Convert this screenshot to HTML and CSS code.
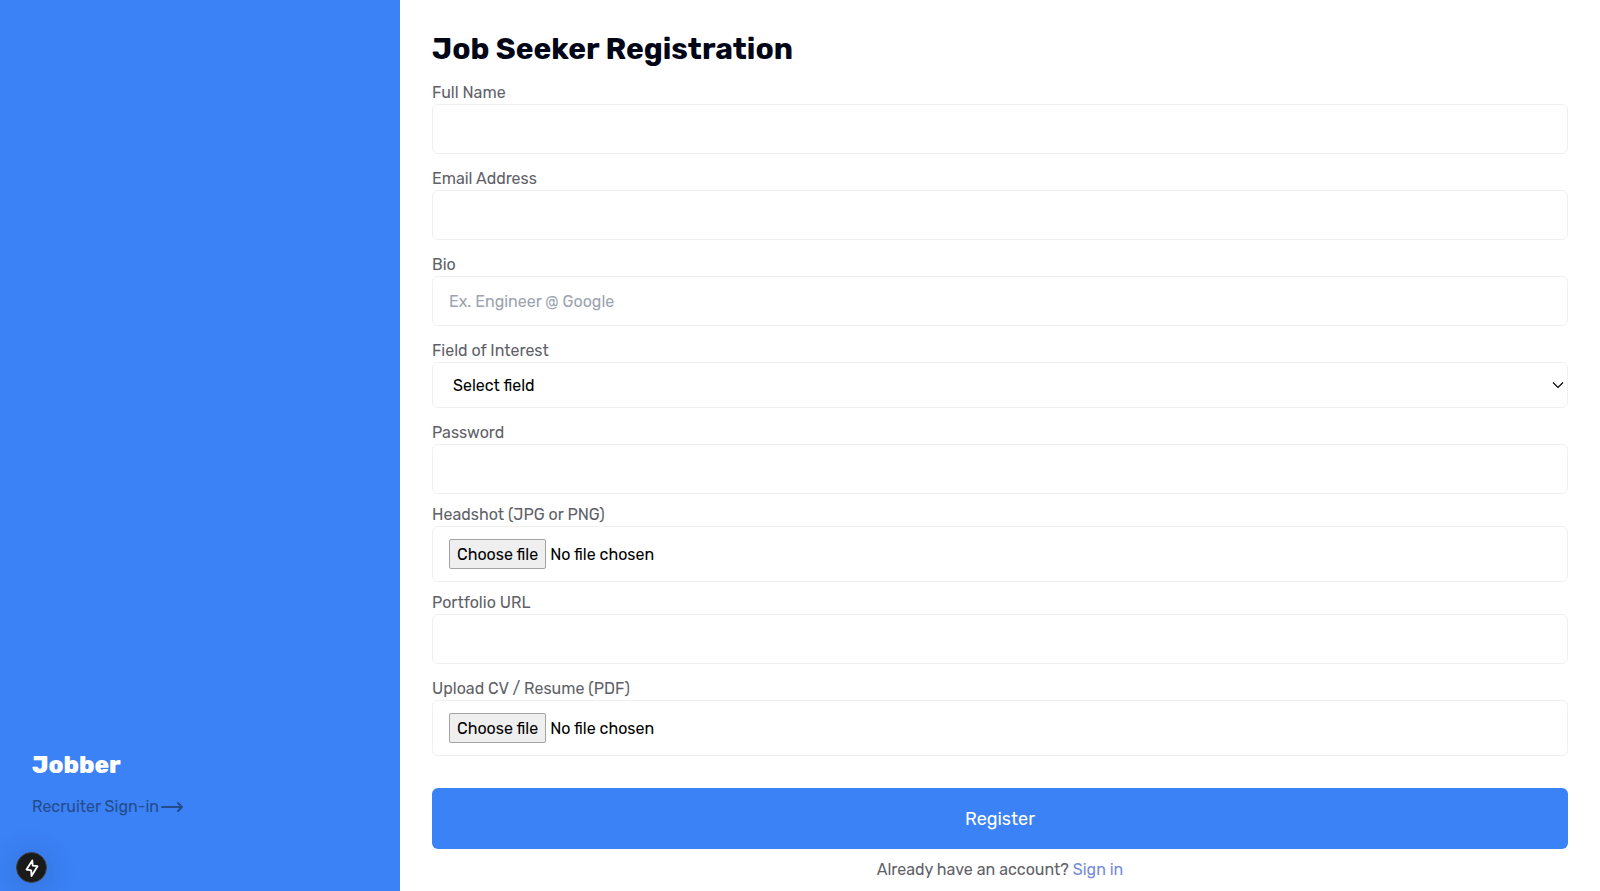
FILE: index.html
```html
<!DOCTYPE html>
<html lang="en">
<head>
    <meta charset="UTF-8">
    <meta name="viewport" content="width=device-width, initial-scale=1.0">
    <title>Job Seeker Registration - Jobber</title>
    <link rel="stylesheet" href="styles.css">
</head>
<body>
    <div class="page">
        <aside class="sidebar">
            <h2 class="brand">Jobber</h2>
            <a href="#" class="recruiter-link">Recruiter Sign-in<svg class="arrow" viewBox="0 0 24 12" fill="none" stroke="currentColor" stroke-width="2" stroke-linecap="round" stroke-linejoin="round" aria-hidden="true"><path d="M2 6h20M18 2l4 4-4 4"/></svg></a>
        </aside>

        <main class="content">
            <h1>Job Seeker Registration</h1>
            <form>
                <div class="field">
                    <label for="name">Full Name</label>
                    <input type="text" id="name" name="name">
                </div>
                <div class="field">
                    <label for="email">Email Address</label>
                    <input type="email" id="email" name="email">
                </div>
                <div class="field">
                    <label for="bio">Bio</label>
                    <input type="text" id="bio" name="bio" placeholder="Ex. Engineer @ Google">
                </div>
                <div class="field">
                    <label for="interest">Field of Interest</label>
                    <div class="select-wrap">
                        <select id="interest" name="interest">
                            <option value="">Select field</option>
                        </select>
                        <svg class="chevron" viewBox="0 0 12 8" fill="none" stroke="currentColor" stroke-width="1.1" aria-hidden="true"><path d="M1 1.500l5 5 5-5"/></svg>
                    </div>
                </div>
                <div class="field field-tight">
                    <label for="password">Password</label>
                    <input type="password" id="password" name="password">
                </div>
                <div class="field field-tight">
                    <label for="headshot">Headshot (JPG or PNG)</label>
                    <div class="file-box">
                        <span class="file-button">Choose file</span>
                        <span class="file-name">No file chosen</span>
                        <input type="file" id="headshot" name="headshot" accept="image/jpeg,image/png">
                    </div>
                </div>
                <div class="field">
                    <label for="portfolio">Portfolio URL</label>
                    <input type="url" id="portfolio" name="portfolio">
                </div>
                <div class="field">
                    <label for="cv">Upload CV / Resume (PDF)</label>
                    <div class="file-box">
                        <span class="file-button">Choose file</span>
                        <span class="file-name">No file chosen</span>
                        <input type="file" id="cv" name="cv" accept="application/pdf">
                    </div>
                </div>
                <button type="submit" class="btn-register">Register</button>
            </form>
            <p class="signin">Already have an account? <a href="#">Sign in</a></p>
        </main>
    </div>

    <button type="button" class="dev-badge" aria-label="Static route">
        <svg viewBox="0 0 20 20" fill="none" stroke="currentColor" stroke-width="1.8" stroke-linejoin="round" aria-hidden="true"><path d="M10.300 2.500 4.500 11.500l4.700.8.300 5.700 6-9.800-4.800-.6z"/></svg>
    </button>

    <script>
        // Show the picked file's name next to the button
        document.querySelectorAll('.file-box input').forEach(function(input) {
            input.addEventListener('change', function() {
                const name = input.parentElement.querySelector('.file-name');
                name.textContent = input.files.length ? input.files[0].name : 'No file chosen';
            });
        });
    </script>
</body>
</html>
```
FILE: styles.css
```css
* {
    box-sizing: border-box;
}
body {
    margin: 0;
    font-family: Rubik, Roboto, sans-serif;
    font-size: 16px;
    line-height: 24px;
    color: #000;
    background: #fff;
}
h1, h2, p {
    margin: 0;
}
a {
    text-decoration: none;
}
.page {
    display: flex;
    min-height: 100vh;
}
.sidebar {
    width: 25%;
    padding: 32px 32px 72px;
    background: #3b82f6;
    display: flex;
    flex-direction: column;
    justify-content: flex-end;
    gap: 14px;
}
.brand {
    font-size: 24px;
    line-height: 32px;
    font-weight: 800;
    color: #fff;
}
.recruiter-link {
    display: flex;
    align-items: center;
    color: #244c8c;
}
.arrow {
    width: 24px;
    height: 12px;
    margin-left: 1px;
}
.content {
    flex: 1;
    padding: 32px 32px 8px;
}
h1 {
    margin-bottom: 14px;
    font-size: 30px;
    line-height: 34px;
    font-weight: 700;
    color: #020617;
}
.field {
    margin-bottom: 12px;
}
.field-tight {
    margin-bottom: 8px;
}
.field label {
    display: block;
    padding-top: 2px;
    line-height: 22px;
    color: #5f6168;
}
.field > input,
.field select,
.file-box {
    width: 100%;
    height: 50px;
    padding: 12px 16px;
    border: 1px solid #f0f0f1;
    border-radius: 6px;
    background: #fff;
    color: #000;
    font: inherit;
}
.field > input,
.field select {
    display: block;
}
.field input::placeholder {
    color: #9ca3af;
}
.select-wrap {
    position: relative;
}
.field select {
    height: 46px;
    padding: 10px 20px 8px;
    appearance: none;
}
.chevron {
    position: absolute;
    top: 19px;
    right: 4px;
    width: 12px;
    height: 8px;
    pointer-events: none;
}
.file-box {
    position: relative;
    height: 56px;
    display: flex;
    align-items: center;
    gap: 4px;
}
.file-button,
.file-name {
    padding-top: 3px;
    padding-bottom: 1px;
}
.file-button {
    padding-left: 7px;
    padding-right: 7px;
    border: 1px solid #a3a3a3;
    border-radius: 2px;
    background: #efefef;
}
/* real input lies over the box so the whole row is clickable */
.file-box input {
    position: absolute;
    inset: 0;
    width: 100%;
    opacity: 0;
    cursor: pointer;
}
.btn-register {
    display: block;
    width: 100%;
    height: 61px;
    margin-top: 32px;
    border: none;
    border-radius: 6px;
    background: #3b82f6;
    color: #fff;
    font-family: inherit;
    font-size: 18px;
    font-weight: 400;
    cursor: pointer;
}
.signin {
    margin-top: 9px;
    text-align: center;
    color: #5f6168;
}
.signin a {
    color: #748bd8;
}
.dev-badge {
    position: fixed;
    left: 16px;
    bottom: 8px;
    width: 31px;
    height: 31px;
    padding: 0;
    border: 1px solid #3f3f3f;
    border-radius: 50%;
    background: #1a1a1a;
    color: #fff;
    display: flex;
    align-items: center;
    justify-content: center;
    box-shadow: 0 4px 32px rgba(0, 0, 0, 0.2);
}
.dev-badge svg {
    width: 20px;
    height: 20px;
}
```
